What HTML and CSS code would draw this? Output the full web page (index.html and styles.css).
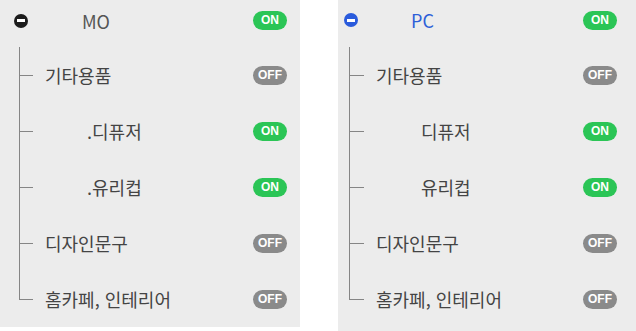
FILE: index.html
```html
<!DOCTYPE html>
<html lang="ko">
<head>
  <meta charset="UTF-8">
  <title>카테고리 노출 설정</title>
  <link rel="stylesheet" href="styles.css">
</head>
<body>

  <!-- MO tree -->
  <div class="panel panel-mo">
    <div class="root">
      <span class="minus"></span>
      <span class="root-label">MO</span>
      <span class="toggle on">ON</span>
    </div>
    <div class="children">
      <div class="item">
        <span class="branch"></span>
        <span class="label">기타용품</span>
        <span class="toggle off">OFF</span>
      </div>
      <div class="item">
        <span class="branch"></span>
        <span class="label sub">.디퓨저</span>
        <span class="toggle on">ON</span>
      </div>
      <div class="item">
        <span class="branch"></span>
        <span class="label sub">.유리컵</span>
        <span class="toggle on">ON</span>
      </div>
      <div class="item">
        <span class="branch"></span>
        <span class="label">디자인문구</span>
        <span class="toggle off">OFF</span>
      </div>
      <div class="item last">
        <span class="branch"></span>
        <span class="label">홈카페, 인테리어</span>
        <span class="toggle off">OFF</span>
      </div>
    </div>
  </div>

  <!-- PC tree -->
  <div class="panel panel-pc">
    <div class="root">
      <span class="minus"></span>
      <span class="root-label">PC</span>
      <span class="toggle on">ON</span>
    </div>
    <div class="children">
      <div class="item">
        <span class="branch"></span>
        <span class="label">기타용품</span>
        <span class="toggle off">OFF</span>
      </div>
      <div class="item">
        <span class="branch"></span>
        <span class="label sub">디퓨저</span>
        <span class="toggle on">ON</span>
      </div>
      <div class="item">
        <span class="branch"></span>
        <span class="label sub">유리컵</span>
        <span class="toggle on">ON</span>
      </div>
      <div class="item">
        <span class="branch"></span>
        <span class="label">디자인문구</span>
        <span class="toggle off">OFF</span>
      </div>
      <div class="item last">
        <span class="branch"></span>
        <span class="label">홈카페, 인테리어</span>
        <span class="toggle off">OFF</span>
      </div>
    </div>
  </div>

</body>
</html>
```

FILE: styles.css
```css
/* Page */
body {
  margin: 0;
  display: flex;
  gap: 38px;
  align-items: flex-start;
  background: #ffffff;
  font-family: "Noto Sans CJK KR", "Noto Sans", sans-serif;
  color: #444444;
}

/* Panels */
.panel {
  background: #ececec;
  display: flex;
  flex-direction: column;
}

.panel-mo {
  width: 300px;
  height: 327px;
  padding-right: 13px;
  box-sizing: border-box;
}

.panel-pc {
  width: 298px;
  height: 331px;
  padding-right: 19px;
  box-sizing: border-box;
}

/* Root row */
.root {
  display: flex;
  align-items: center;
}

.panel-mo .root {
  height: 44px;
  padding-left: 14px;
}

.panel-pc .root {
  height: 40px;
  padding-left: 6px;
}

.minus {
  width: 14px;
  height: 14px;
  border-radius: 50%;
  background: #1c1c1c;
  display: flex;
  align-items: center;
  justify-content: center;
  flex-shrink: 0;
}

.minus::after {
  content: "";
  width: 8px;
  height: 3px;
  background: #ffffff;
}

.panel-pc .minus {
  background: #2a5bdc;
}

.root-label {
  font-size: 18px;
  flex: 1;
}

.panel-mo .root-label {
  margin-left: 54px;
  color: #555555;
}

.panel-pc .root-label {
  margin-left: 53px;
  color: #2e5fd8;
}

/* Child rows */
.children {
  display: flex;
  flex-direction: column;
}

.panel-mo .children {
  margin-top: 6px;
  margin-left: 19px;
}

.panel-pc .children {
  margin-top: 7px;
  margin-left: 11px;
}

.item {
  height: 56px;
  display: flex;
  align-items: center;
}

.branch {
  width: 14px;
  align-self: stretch;
  flex-shrink: 0;
  background:
    linear-gradient(#858585, #858585) left top / 1px 100% no-repeat,
    linear-gradient(#858585, #858585) left center / 100% 1px no-repeat;
}

.panel-pc .branch {
  width: 15px;
}

.item.last .branch {
  background:
    linear-gradient(#858585, #858585) left top / 1px 50% no-repeat,
    linear-gradient(#858585, #858585) left center / 100% 1px no-repeat;
}

.label {
  flex: 1;
  font-size: 18px;
  margin-left: 12px;
  white-space: nowrap;
}

.panel-mo .label.sub {
  margin-left: 54px;
}

.panel-pc .label.sub {
  margin-left: 57px;
}

/* Toggle pills */
.toggle {
  width: 34px;
  height: 19px;
  border-radius: 10px;
  color: #ffffff;
  font-family: "Liberation Sans", Arial, sans-serif;
  font-weight: bold;
  font-size: 12px;
  line-height: 19px;
  text-align: center;
  flex-shrink: 0;
}

.toggle.on {
  background: #2bc556;
}

.toggle.off {
  background: #8a8a8a;
}
```
